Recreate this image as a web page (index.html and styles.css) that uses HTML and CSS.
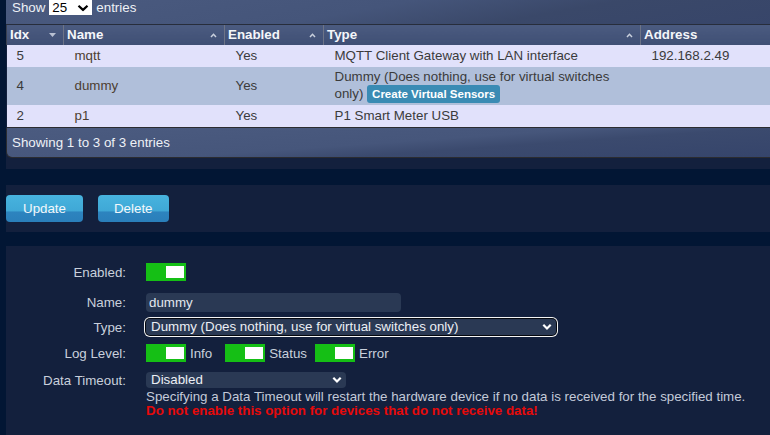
FILE: index.html
```html
<!DOCTYPE html>
<html lang="en">
<head>
<meta charset="utf-8">
<title>Hardware</title>
<link rel="stylesheet" href="styles.css">
</head>
<body>
<div class="page">
  <section class="panel list-panel">
    <div class="grid-box">
      <div class="toolbar">
        <label class="length">Show
          <span class="sel-wrap sel-light">
            <select class="sel-show"><option>25</option></select>
            <svg class="chev chev-show" viewBox="0 0 12 7" width="12" height="7"><path d="M1.5 1.2 L6 5.4 L10.5 1.2" fill="none" stroke="#000" stroke-width="2.2"/></svg>
          </span>
          entries</label>
      </div>
      <table class="hw-table">
        <colgroup>
          <col class="c-idx"><col class="c-name"><col class="c-en"><col class="c-type"><col class="c-addr">
        </colgroup>
        <thead>
          <tr>
            <th><div class="th-in"><span>Idx</span><svg class="sort" viewBox="0 0 7 4" width="7" height="4"><path d="M0 0 H7 L3.5 4 Z" fill="#b9c1d2"/></svg></div></th>
            <th><div class="th-in"><span>Name</span><svg class="sort" viewBox="0 0 7 5" width="7" height="5"><path d="M1 4 L3.5 1.3 L6 4" fill="none" stroke="#c9d0dd" stroke-width="1.5"/></svg></div></th>
            <th><div class="th-in"><span>Enabled</span><svg class="sort" viewBox="0 0 7 5" width="7" height="5"><path d="M1 4 L3.5 1.3 L6 4" fill="none" stroke="#c9d0dd" stroke-width="1.5"/></svg></div></th>
            <th><div class="th-in"><span>Type</span><svg class="sort" viewBox="0 0 7 5" width="7" height="5"><path d="M1 4 L3.5 1.3 L6 4" fill="none" stroke="#c9d0dd" stroke-width="1.5"/></svg></div></th>
            <th><div class="th-in"><span>Address</span><svg class="sort" viewBox="0 0 7 5" width="7" height="5"><path d="M1 4 L3.5 1.3 L6 4" fill="none" stroke="#c9d0dd" stroke-width="1.5"/></svg></div></th>
          </tr>
        </thead>
        <tbody>
          <tr class="odd">
            <td>5</td><td class="name">mqtt</td><td>Yes</td><td>MQTT Client Gateway with LAN interface</td><td>192.168.2.49</td>
          </tr>
          <tr class="even">
            <td>4</td><td class="name">dummy</td><td>Yes</td><td>Dummy (Does nothing, use for virtual switches only) <button class="btn-small">Create Virtual Sensors</button></td><td></td>
          </tr>
          <tr class="odd">
            <td>2</td><td class="name">p1</td><td>Yes</td><td>P1 Smart Meter USB</td><td></td>
          </tr>
        </tbody>
      </table>
      <div class="info-bar">Showing 1 to 3 of 3 entries</div>
    </div>
  </section>

  <section class="panel actions">
    <button class="btn btn-update">Update</button>
    <button class="btn btn-delete">Delete</button>
  </section>

  <section class="panel form-panel">
    <div class="frow r-enabled">
      <span class="flabel">Enabled:</span>
      <span class="toggle"></span>
    </div>
    <div class="frow r-name">
      <span class="flabel">Name:</span>
      <input class="text-in" type="text" value="dummy">
    </div>
    <div class="frow r-type">
      <span class="flabel">Type:</span>
      <span class="sel-wrap">
        <select class="sel-dark sel-type"><option>Dummy (Does nothing, use for virtual switches only)</option></select>
        <svg class="chev" viewBox="0 0 10 7" width="10" height="7"><path d="M1.3 1.3 L5 5 L8.7 1.3" fill="none" stroke="#fff" stroke-width="2.2"/></svg>
      </span>
    </div>
    <div class="frow r-log">
      <span class="flabel">Log Level:</span>
      <span class="toggle"></span><span class="tlabel t-info">Info</span>
      <span class="toggle"></span><span class="tlabel t-status">Status</span>
      <span class="toggle"></span><span class="tlabel">Error</span>
    </div>
    <div class="frow r-timeout">
      <span class="flabel flabel-top">Data Timeout:</span>
      <div class="fcol">
        <span class="sel-wrap">
          <select class="sel-dark sel-timeout"><option>Disabled</option></select>
          <svg class="chev" viewBox="0 0 10 7" width="10" height="7"><path d="M1.3 1.3 L5 5 L8.7 1.3" fill="none" stroke="#fff" stroke-width="2.2"/></svg>
        </span>
        <p class="help">Specifying a Data Timeout will restart the hardware device if no data is received for the specified time.</p>
        <p class="warn">Do not enable this option for devices that do not receive data!</p>
      </div>
    </div>
  </section>
</div>
</body>
</html>
```

FILE: styles.css
```css
* { box-sizing: border-box; }

html, body {
  margin: 0;
  padding: 0;
  background: #021634;
  overflow: hidden;
}

body {
  font-family: "Liberation Sans", Arial, sans-serif;
  font-size: 13.33px;
  color: #c9d0dc;
}

.page {
  width: 900px;
  padding-left: 6px;
}

.panel {
  background: #13203d;
}

/* ---------- list panel ---------- */
.list-panel {
  padding-bottom: 11px;
}

.grid-box {
  display: flex;
  flex-direction: column;
}

.toolbar {
  height: 25px;
  padding: 0 6px;
  border-bottom: 1px solid #272d3b;
  background: linear-gradient(170deg, #4a5a7f 0%, #45557a 40%, #3a4869 60%, #36446a 100%);
  color: #eef1f6;
}

.length {
  display: flex;
  align-items: flex-start;
  gap: 4px;
  line-height: 15px;
  margin-top: 0;
}

.sel-wrap {
  position: relative;
  display: inline-flex;
}

.sel-wrap .chev {
  position: absolute;
  right: 4px;
  top: 50%;
  transform: translateY(-50%);
  pointer-events: none;
}

.sel-show {
  appearance: none;
  -webkit-appearance: none;
  width: 43px;
  height: 15px;
  border: none;
  border-radius: 0;
  background: #fff;
  color: #000;
  font: 13.33px "Liberation Sans", Arial, sans-serif;
  line-height: 15px;
  padding: 0 0 0 3px;
  margin: 0;
}

.chev-show {
  right: 3px !important;
}

.hw-table {
  width: 100%;
  border-collapse: collapse;
  table-layout: fixed;
  border-bottom: 1px solid #2b2c30;
}

.c-idx { width: 57px; }
.c-name { width: 161px; }
.c-en { width: 99px; }
.c-type { width: 317px; }

.hw-table th {
  height: 20px;
  padding: 0 7px 0 3px;
  background: linear-gradient(#4b5b80, #3f4f74);
  color: #f4f6fa;
  font-weight: bold;
  text-align: left;
  border-right: 1px solid #6d7487;
  line-height: 20px;
}

.hw-table th:first-child {
  border-left: 1px solid #3a4050;
}

.th-in {
  display: flex;
  align-items: center;
  justify-content: space-between;
}

.hw-table td {
  padding: 3px 10px 3px 11px;
  line-height: 16px;
  color: #3b3b3b;
  vertical-align: middle;
}

.hw-table td:first-child {
  padding-left: 10px;
}

.hw-table td.name {
  color: #4d3e31;
}

.hw-table tr.odd td { background: #e1e1fb; }
.hw-table tr.even td { background: #b0bfda; height: 38px; padding-top: 1px; padding-bottom: 1px; }

.btn-small {
  display: inline-block;
  border: none;
  border-radius: 3px;
  background: #3a8bb4;
  color: #fff;
  font: bold 11.5px "Liberation Sans", Arial, sans-serif;
  height: 18px;
  line-height: 18px;
  padding: 0 5px;
  margin: 0;
  vertical-align: middle;
}

.info-bar {
  height: 30px;
  padding: 0 5px;
  line-height: 30px;
  color: #eef1f6;
  border: 1px solid #2b2c30;
  border-top: none;
  border-radius: 0 0 6px 6px;
  background: linear-gradient(176deg, #4b5b80 0%, #46567b 45%, #3b4a6e 58%, #34436a 100%);
}

/* ---------- actions ---------- */
.actions {
  margin-top: 16px;
  padding: 10px 0;
  display: flex;
  gap: 15px;
}

.btn {
  height: 27px;
  padding: 0 17px;
  border: none;
  border-radius: 4px;
  background: linear-gradient(#47b3de 0%, #3fa8d6 60%, #2d84bf 62%, #2a7fba 100%);
  color: #f3f7fb;
  font: 13.33px "Liberation Sans", Arial, sans-serif;
  margin: 0;
}

.btn-delete {
  padding: 0 16px;
}

/* ---------- form ---------- */
.form-panel {
  margin-top: 14px;
  padding-top: 17px;
  height: 260px;
}

.frow {
  display: flex;
  align-items: center;
}

.flabel {
  flex: none;
  width: 120px;
  margin-right: 20px;
  text-align: right;
  color: #c9d0dc;
}

.flabel-top {
  line-height: 17px;
}

.r-enabled { height: 18px; margin-bottom: 12px; }
.r-name { height: 19px; margin-bottom: 7px; }
.r-type { height: 16px; margin-bottom: 9px; }
.r-log { height: 18px; margin-bottom: 10px; }
.r-timeout { align-items: flex-start; }

.toggle {
  flex: none;
  width: 40px;
  height: 18px;
  background: #15bf15;
  display: flex;
  justify-content: flex-end;
  align-items: center;
  padding-right: 2px;
}

.toggle::after {
  content: "";
  display: block;
  width: 18px;
  height: 12px;
  background: #fff;
}

.tlabel {
  margin-left: 4px;
  color: #c9d0dc;
}

.t-info { margin-right: 13px; }
.t-status { margin-right: 8px; }

.text-in {
  width: 255px;
  height: 19px;
  border: none;
  border-radius: 4px;
  background: #2a3954;
  color: #e2e6ee;
  font: 13.33px "Liberation Sans", Arial, sans-serif;
  padding: 0 3px;
  margin: 0;
  outline: none;
}

.sel-dark {
  appearance: none;
  -webkit-appearance: none;
  height: 16px;
  border: none;
  border-radius: 4px;
  background: #2a3954;
  color: #eceff5;
  font: 13.33px "Liberation Sans", Arial, sans-serif;
  padding: 0 0 0 5px;
  margin: 0;
  line-height: 16px;
}

.sel-type {
  width: 410px;
  box-shadow: 0 0 0 1px #05080f, 0 0 0 2px #f4f4f4;
}

.sel-timeout {
  width: 200px;
}

.fcol {
  display: flex;
  flex-direction: column;
  align-items: flex-start;
}

.help, .warn {
  margin: 0;
  line-height: 14px;
}

.help {
  margin-top: 2px;
  color: #c3cad9;
}

.warn {
  color: #e60a0a;
  font-weight: bold;
}
```
